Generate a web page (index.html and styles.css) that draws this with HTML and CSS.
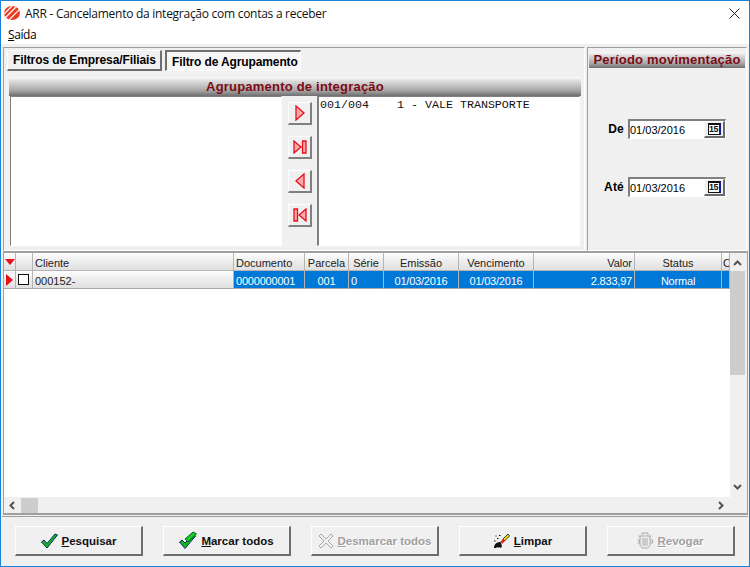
FILE: index.html
```html
<!DOCTYPE html>
<html lang="pt">
<head>
<meta charset="utf-8">
<title>ARR</title>
<link rel="stylesheet" href="styles.css">
</head>
<body>
<div class="window">
  <header class="titlebar">
    <svg class="app-icon" width="16" height="14" viewBox="0 0 16 14"><ellipse cx="8" cy="7" rx="8" ry="7" fill="#ea3a22"/><g stroke="#fff" stroke-width="1.2" fill="none"><path d="M0 8 8 0"/><path d="M1 12 12 1"/><path d="M5 14 16 3"/></g></svg>
    <span class="title-text">ARR - Cancelamento da integração com contas a receber</span>
    <svg class="close-icon" width="11" height="11" viewBox="0 0 11 11"><path d="M.5.5l10 10M10.500.5l-10 10" stroke="#222" fill="none"/></svg>
  </header>
  <nav class="menubar"><span><u>S</u>aída</span></nav>
  <section class="top">
    <div class="filters">
      <div class="tabs">
        <div class="tab">Filtros de Empresa/Filiais</div>
        <div class="tab tab-active">Filtro de Agrupamento</div>
      </div>
      <div class="group">
        <h2 class="band band-wide">Agrupamento de integração</h2>
        <div class="picker">
          <div class="list"></div>
          <div class="movers">
            <button class="mover"><svg width="10" height="16" viewBox="0 0 10 16"><path d="M1 1v14L9 8z" fill="#ffa8a8" stroke="#e5101c" stroke-width="1.300"/></svg></button>
            <button class="mover"><svg width="14" height="14" viewBox="0 0 14 14"><path d="M1 1v12L8 7z" fill="#ffa8a8" stroke="#e5101c" stroke-width="1.300"/><path d="M9.500 1h3.500v12H9.500z" fill="#ffa8a8" stroke="#e5101c" stroke-width="1.300"/></svg></button>
            <button class="mover"><svg width="10" height="16" viewBox="0 0 10 16"><path d="M9 1v14L1 8z" fill="#ffa8a8" stroke="#e5101c" stroke-width="1.300"/></svg></button>
            <button class="mover"><svg width="14" height="14" viewBox="0 0 14 14"><path d="M1 1h3.500v12H1z" fill="#ffa8a8" stroke="#e5101c" stroke-width="1.300"/><path d="M13 1v12L6 7z" fill="#ffa8a8" stroke="#e5101c" stroke-width="1.300"/></svg></button>
          </div>
          <div class="list list-right">001/004    1 - VALE TRANSPORTE</div>
        </div>
      </div>
    </div>
    <aside class="period">
      <h2 class="band band-narrow">Período movimentação</h2>
      <div class="dates">
        <div class="date-row">
          <label class="date-label">De</label>
          <div class="date-input"><span>01/03/2016</span><span class="cal"><span class="cal-face">15</span></span></div>
        </div>
        <div class="date-row">
          <label class="date-label">Até</label>
          <div class="date-input"><span>01/03/2016</span><span class="cal"><span class="cal-face">15</span></span></div>
        </div>
      </div>
    </aside>
  </section>
  <section class="grid-panel">
    <div class="grid-main">
      <div class="table">
        <div class="hd hd-ind"><svg width="10" height="6" viewBox="0 0 10 6"><path d="M0 0h10L5 6z" fill="#e8101c"/></svg></div>
        <div class="hd"></div>
        <div class="hd">Cliente</div>
        <div class="hd">Documento</div>
        <div class="hd ctr">Parcela</div>
        <div class="hd ctr">Série</div>
        <div class="hd ctr">Emissão</div>
        <div class="hd ctr">Vencimento</div>
        <div class="hd rgt">Valor</div>
        <div class="hd ctr">Status</div>
        <div class="hd clip">C</div>

        <div class="hd hd-row hd-ind"><svg width="7" height="12" viewBox="0 0 7 12"><path d="M0 0l7 6-7 6z" fill="#e8101c"/></svg></div>
        <div class="hd hd-row"><span class="check"></span></div>
        <div class="hd hd-row">000152-</div>
        <div class="sel">0000000001</div>
        <div class="sel ctr">001</div>
        <div class="sel">0</div>
        <div class="sel ctr">01/03/2016</div>
        <div class="sel ctr">01/03/2016</div>
        <div class="sel rgt">2.833,97</div>
        <div class="sel ctr">Normal</div>
        <div class="sel"></div>
      </div>
      <div class="vbar">
        <svg class="arrow" width="9" height="6" viewBox="0 0 9 6"><path d="M1 5l3.500-3.500L8 5" stroke="#555" stroke-width="2" fill="none"/></svg>
        <div class="vthumb"></div>
        <svg class="arrow arrow-end" width="9" height="6" viewBox="0 0 9 6"><path d="M1 1l3.500 3.500L8 1" stroke="#555" stroke-width="2" fill="none"/></svg>
      </div>
    </div>
    <div class="hbar">
      <svg width="6" height="9" viewBox="0 0 6 9"><path d="M5 1L1.500 4.500 5 8" stroke="#555" stroke-width="2" fill="none"/></svg>
      <div class="hthumb"></div>
      <svg class="hbar-end" width="6" height="9" viewBox="0 0 6 9"><path d="M1 1l3.500 3.500L1 8" stroke="#555" stroke-width="2" fill="none"/></svg>
    </div>
  </section>
  <footer class="actions">
    <button class="action"><svg width="17" height="16" viewBox="0 0 17 16"><path d="M.5 9l2.500-2 3 3.500L14 1l2.500 1L6 15z" fill="#14b81c" stroke="#0a2a6a"/></svg><span><u>P</u>esquisar</span></button>
    <button class="action"><svg width="18" height="19" viewBox="0 0 18 19"><path d="M.5 11l2.500-2 3 3 8-8 2.500 1L6 17.500z" fill="#14b81c" stroke="#0a2a6a"/><path d="M6 8l8-7 3.500 2L9 11z" fill="#1ac824" stroke="#0a5a2a"/></svg><span><u>M</u>arcar todos</span></button>
    <button class="action off"><svg width="16" height="16" viewBox="0 0 16 16"><path d="M1 3l2-2 5 5 5-5 2 2-5 5 5 5-2 2-5-5-5 5-2-2 5-5z" fill="#f0f0f0" stroke="#a8a8a8"/></svg><span><u>D</u>esmarcar todos</span></button>
    <button class="action"><svg width="17" height="16" viewBox="0 0 17 16"><path d="M10 6l5-5 1.500 2-5 5z" fill="#f5d90a" stroke="#111" stroke-width=".8"/><path d="M7.500 8.500L10 6l2 2-3 3z" fill="#e8201c"/><path d="M1 15c0-4 3-6 6.500-6L9 13l-1 2-2-1-1 1-1-1-1 1z" fill="#111"/><path d="M1 8h1.500M4 5.500h1.500M6 2.500h1.500M2.500 3h1" stroke="#111"/></svg><span><u>L</u>impar</span></button>
    <button class="action off"><svg width="16" height="17" viewBox="0 0 16 17"><path d="M5 3V1h6v2M1.500 4h13M3 4v8c0 2 1 4 3 4h4c2 0 3-2 3-4V4M6 6v8M8 6v8M10 6v8M.5 8h2v3h-2M13.500 8h2v3h-2" fill="none" stroke="#a8a8a8"/></svg><span><u>R</u>evogar</span></button>
  </footer>
</div>
</body>
</html>
```
FILE: styles.css
```css
* { box-sizing: border-box; }
html, body { margin: 0; height: 100%; }
body { font-family: "Liberation Sans", Arial, sans-serif; font-size: 11px; color: #000; overflow: hidden; }
h2 { margin: 0; }

.window { height: 567px; border: 1px solid #1883d7; background: #f0f0f0; display: flex; flex-direction: column; }

.titlebar { height: 24px; background: #fff; display: flex; align-items: center; padding: 0 9px 0 3px; flex: none; }
.app-icon { margin-right: 5px; }
.title-text { font-family: "Open Sans", sans-serif; font-size: 12px; color: #111; flex: 1; letter-spacing: -.27px; }

.menubar { height: 19px; background: #fff; padding: 0 0 0 7px; font-family: "Open Sans", sans-serif; font-size: 12px; line-height: 20px; flex: none; letter-spacing: -.4px; }

.top { display: flex; height: 204px; margin: 3px 2px 0; gap: 2px; flex: none; }

.filters { width: 582px; flex: none; border: 1px solid #a0a0a0; border-right-color: #fff; border-bottom-color: #fff; padding: 2px 3px 0 3px; display: flex; flex-direction: column; }
.tabs { display: flex; gap: 3px; height: 24px; flex: none; }
.tab { height: 21px; padding: 0 0 0 5px; border: solid; border-width: 1px 2px 2px 1px; border-color: #fff #6e6e6e #6e6e6e #fff; font-size: 12px; font-weight: bold; line-height: 18px; letter-spacing: -.1px; background: #f0f0f0; width: 155px; white-space: nowrap; }
.tab-active { width: 136px; padding: 1px 0 0 5px; border-width: 2px 1px 1px 2px; border-color: #6e6e6e #fff #fff #6e6e6e; background: #f6f6f6; letter-spacing: -.12px; }

.group { flex: 1; display: flex; flex-direction: column; padding: 3px 0 0 2px; min-height: 0; }
.band { font-size: 13px; font-weight: bold; color: #7d0a14; text-align: center; background: linear-gradient(#fafafa, #d8d8d8 25%, #a8a8a8 70%, #6f6f6f); flex: none; letter-spacing: .21px; white-space: nowrap; }
.band-wide { height: 19px; line-height: 19px; width: 572px; }
.band-narrow { height: 16px; line-height: 16px; }

.picker { display: flex; flex: 1; min-height: 0; }
.list { width: 272px; margin: 0 0 4px 1px; background: #fff; border: 1px solid; border-color: #808080 #fff #fff #808080; }
.list-right { width: 263px; margin-left: 0; border-left-width: 2px; padding: 2px 0 0 1px; font-family: "Liberation Mono", monospace; font-size: 11.67px; line-height: 13px; white-space: pre; color: #111; }
.movers { width: 35px; display: flex; flex-direction: column; align-items: center; padding: 6px 0 0 1px; gap: 11px; }
.mover { width: 24px; height: 23px; padding: 0; background: #f0f0f0; border: solid; border-width: 1px 2px 2px 1px; border-color: #fff #808080 #808080 #fff; display: flex; align-items: center; justify-content: center; }

.period { flex: 1; min-width: 0; border: 1px solid #a0a0a0; border-right-color: #fff; border-bottom-color: #fff; padding: 4px 1px 0; display: flex; flex-direction: column; }
.dates { flex: 1; display: flex; flex-direction: column; gap: 38px; padding-top: 51px; }
.date-row { display: flex; align-items: center; justify-content: flex-end; gap: 4px; padding-right: 19px; }
.date-label { font-weight: bold; font-size: 12px; letter-spacing: .2px; }
.date-input { width: 98px; height: 20px; background: #fff; border: solid; border-width: 2px 1px 1px 2px; border-color: #808080 #fff #fff #808080; display: flex; justify-content: space-between; align-items: center; padding-left: 0; }
.cal { width: 21px; height: 17px; border: solid; border-width: 1px 2px 2px 1px; border-color: #fff #6a6a6a #6a6a6a #fff; background: #f0f0f0; display: flex; align-items: center; justify-content: center; }
.cal-face { display: block; width: 13px; height: 12px; border: solid #111; border-width: 2px 2px 1px 1px; border-right-color: #1a1a8c; background: #fff; font-size: 9px; font-weight: bold; line-height: 9px; text-align: center; color: #111; letter-spacing: -.5px; }

.grid-panel { margin: 0 1px 0 2px; height: 264px; flex: none; border: solid #a0a0a0; border-width: 2px 1px 2px 1px; background: #f0f0f0; display: flex; flex-direction: column; }
.grid-main { flex: 1; display: flex; background: linear-gradient(#fff, #fff) no-repeat left / 726px 100%, #f0f0f0; min-height: 0; }
.table { flex: 1; display: grid; grid-template-columns: 12px 17px 201px 71px 44px 35px 75px 75px 101px 87px 8px; grid-template-rows: 18px 18px; align-content: start; overflow: hidden; }
.hd { background: linear-gradient(#fff, #f0f0f0 40%, #e0e0e0); border-right: 1px solid #b4b4b4; border-bottom: 1px solid #b4b4b4; padding: 0 2px; line-height: 21px; color: #222; white-space: nowrap; overflow: hidden; }
.hd-row { border-bottom: 1px solid #a8a8a8; }
.hd-ind { padding: 0; display: flex; align-items: center; justify-content: center; }
.sel { background: #0078d7; color: #fff; border-right: 1px solid #b4b4b4; border-bottom: 1px solid #a8a8a8; padding: 0 2px; line-height: 21px; white-space: nowrap; overflow: hidden; letter-spacing: -.2px; }
.ctr { text-align: center; }
.rgt { text-align: right; }
.clip { padding: 0 0 0 1px; }
.check { display: block; width: 11px; height: 11px; border: 1px solid #111; background: #fff; margin: 3px 0 0 0; }

.vbar { width: 15px; margin-right: 2px; background: #f0f0f0; display: flex; flex-direction: column; align-items: center; flex: none; }
.arrow { margin: 7px 0 5px; flex: none; }
.vthumb { width: 15px; height: 104px; background: #cdcdcd; flex: none; }
.arrow-end { margin: auto 0 7px; }

.hbar { height: 16px; flex: none; background: #f0f0f0; display: flex; align-items: center; padding: 0 23px 0 5px; }
.hthumb { width: 17px; height: 15px; background: #cdcdcd; margin-left: 6px; }
.hbar-end { margin-left: auto; }

.actions { flex: 1; border-top: 1px solid #a0a0a0; margin: 1px 1px 0; display: flex; gap: 20px; padding: 9px 0 0 13px; }
.action { width: 128px; height: 30px; flex: none; padding: 0; background: #f0f0f0; border: solid; border-width: 1px 2px 2px 1px; border-color: #fff #6e6e6e #6e6e6e #fff; font-family: "Liberation Sans", Arial, sans-serif; font-size: 11.5px; font-weight: bold; color: #111; display: flex; align-items: center; justify-content: center; gap: 4px; white-space: nowrap; }
.off { color: #a0a0a0; text-shadow: 1px 1px 0 #fff; }
```
